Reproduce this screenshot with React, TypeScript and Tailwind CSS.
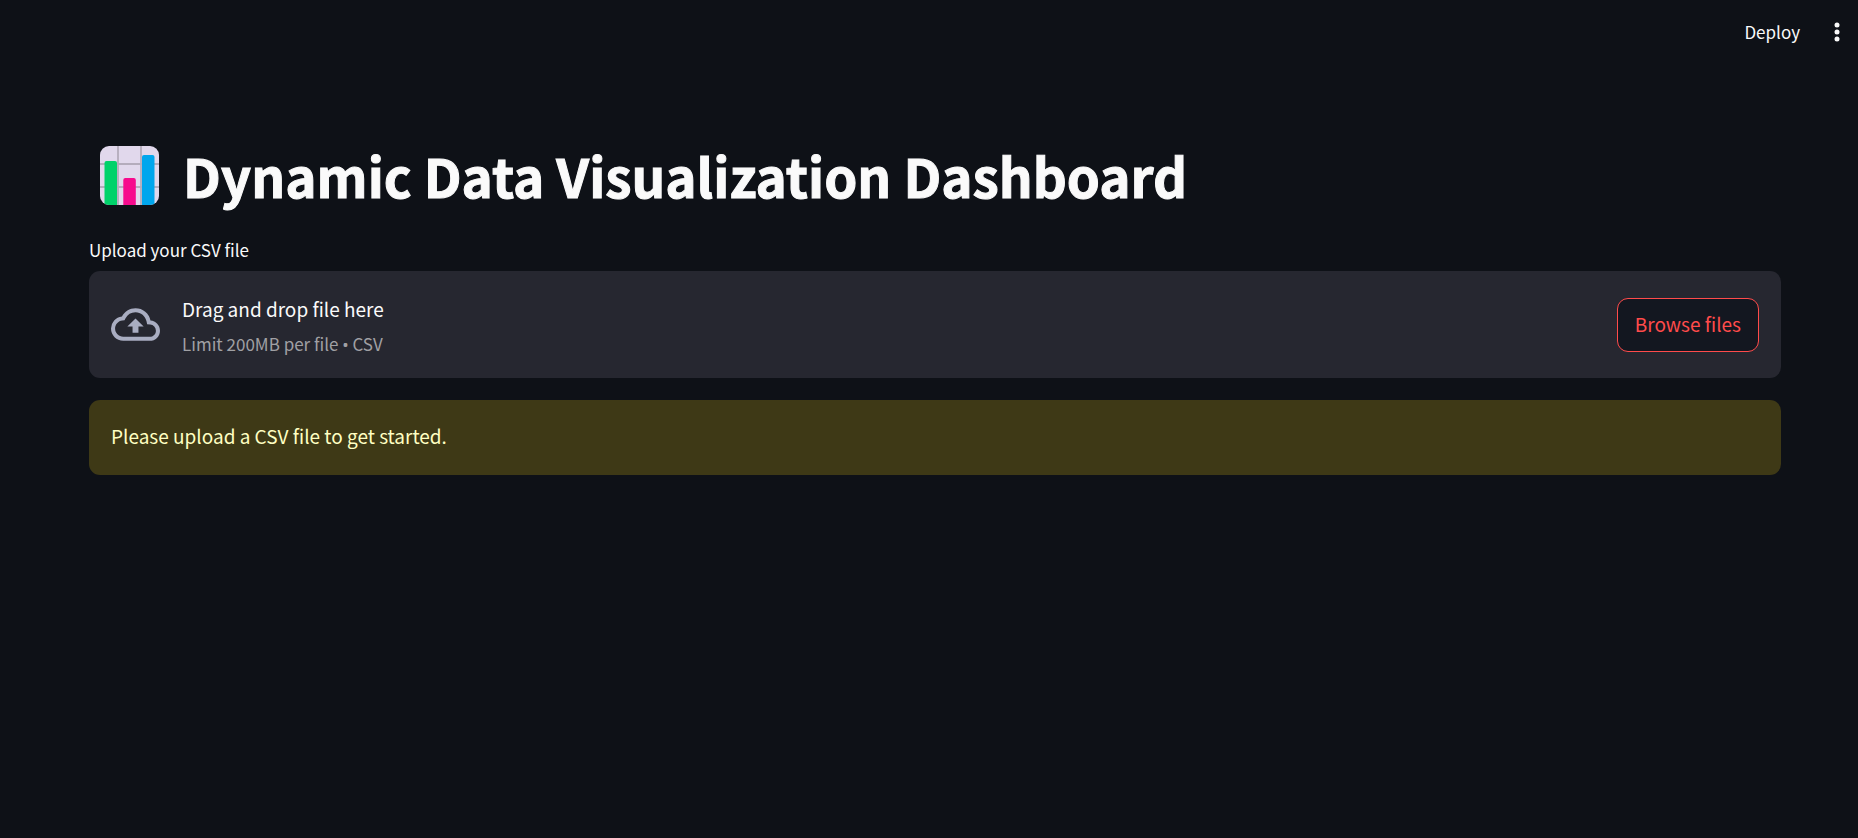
import { useRef } from "react";
import { MdOutlineCloudUpload } from "react-icons/md";

function ChartIcon() {
  return (
    <svg viewBox="0 0 59 59" className="size-[59px] shrink-0" aria-hidden="true">
      <defs>
        <clipPath id="chart-frame">
          <rect width="59" height="59" rx="9" />
        </clipPath>
      </defs>
      <g clipPath="url(#chart-frame)">
        <rect width="59" height="59" fill="#e1d8ec" />
        <path d="M18 0V59M41 0V59M0 18H59M0 41H59" stroke="#b4acbc" strokeWidth="1.8" />
        <path d="M4.5 59V17a2 2 0 0 1 2-2h8.500a2 2 0 0 1 2 2V59z" fill="#00d26a" />
        <path d="M23.300 59V34a2 2 0 0 1 2-2h8.500a2 2 0 0 1 2 2V59z" fill="#f70a8d" />
        <path d="M42 59V11a2 2 0 0 1 2-2h8.500a2 2 0 0 1 2 2V59z" fill="#00a6ed" />
      </g>
    </svg>
  );
}

function Header() {
  return (
    <header className="flex h-16 items-center justify-end gap-7 pr-3">
      <button type="button" className="text-[17px] leading-6">
        Deploy
      </button>
      <button type="button" aria-label="Main menu" className="flex w-[18px] justify-center">
        <svg viewBox="0 0 6 20" className="h-5 w-[6px]" fill="currentColor">
          <circle cx="3" cy="3" r="2.500" />
          <circle cx="3" cy="10" r="2.500" />
          <circle cx="3" cy="17" r="2.500" />
        </svg>
      </button>
    </header>
  );
}

function FileUploader() {
  const input = useRef<HTMLInputElement>(null);
  return (
    <section>
      <label htmlFor="csv-file" className="block text-[17px] leading-6">
        Upload your CSV file
      </label>
      <input ref={input} id="csv-file" type="file" accept=".csv" className="hidden" />
      <div className="mt-[9px] flex items-center rounded-[11px] bg-[#262730] p-[22px]">
        <MdOutlineCloudUpload className="size-[49px] shrink-0 text-[#a9adc1]" />
        <div className="ml-[22px] flex flex-col gap-[7px]">
          <span className="text-[19px] leading-8">Drag and drop file here</span>
          <small className="text-[17px] leading-6 text-[#a0a0a4]">
            Limit 200MB per file <span className="font-['Noto_Sans',sans-serif] leading-none">•</span> CSV
          </small>
        </div>
        <button
          type="button"
          onClick={() => input.current?.click()}
          className="ml-auto h-[54px] rounded-[11px] border border-[#ff4b4b] bg-[#131720] px-[17px] pb-0.5 text-[19px] leading-8 text-[#ff4b4b]"
        >
          Browse files
        </button>
      </div>
    </section>
  );
}

export default function App() {
  return (
    <div className="min-h-screen bg-[#0e1117] font-['Noto_Sans_CJK_SC','Noto_Sans',sans-serif] text-[#fafafa]">
      <Header />
      <main className="pt-[72px] pr-[77px] pb-16 pl-[89px]">
        <h1 className="flex items-center gap-6 pl-[11px] text-[53px] leading-[78px] font-bold [-webkit-text-stroke:1px_#fafafa]">
          <ChartIcon />
          Dynamic Data Visualization Dashboard
        </h1>
        <div className="mt-6 flex flex-col gap-[22px]">
          <FileUploader />
          <div role="alert" className="rounded-[11px] bg-[#3e3916] px-[22px] pt-5 pb-6 text-[19px] leading-[31px] text-[#ffffc2]">
            Please upload a CSV file to get started.
          </div>
        </div>
      </main>
    </div>
  );
}
